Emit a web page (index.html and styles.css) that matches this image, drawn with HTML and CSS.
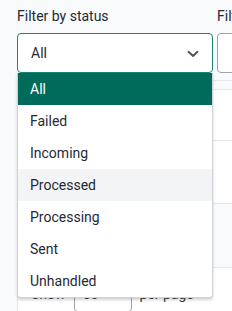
FILE: index.html
```html
<!DOCTYPE html>
<html>
<head>
<meta charset="utf-8">
<link rel="stylesheet" href="styles.css">
</head>
<body>
<div class="page">
  <div class="filters">
    <div class="filter">
      <label class="label">Filter by status</label>
      <div class="select-wrap">
        <div class="select focused">
          <span>All</span>
          <svg class="chev" width="12" height="8" viewBox="0 0 12 8"><path d="M1.5 1.8 L6 6 L10.5 1.8" fill="none" stroke="#4b5563" stroke-width="1.9" stroke-linecap="round" stroke-linejoin="round"/></svg>
        </div>
        <ul class="menu">
          <li class="opt selected">All</li>
          <li class="opt">Failed</li>
          <li class="opt">Incoming</li>
          <li class="opt hover">Processed</li>
          <li class="opt">Processing</li>
          <li class="opt">Sent</li>
          <li class="opt">Unhandled</li>
        </ul>
      </div>
    </div>
    <div class="filter">
      <label class="label">Filter by type</label>
      <div class="select"><span></span></div>
    </div>
  </div>
  <div class="card">
    <div class="thead"></div>
    <div class="row r1"></div>
    <div class="row r2"></div>
    <div class="row r3 striped"></div>
    <div class="pager">
      <span>Show</span>
      <div class="per">50 <span class="caret">▾</span></div>
      <span>per page</span>
    </div>
  </div>
</div>
</body>
</html>
```
FILE: styles.css
```css
* { box-sizing: border-box; }
html, body { margin: 0; padding: 0; }
body {
  background: #f9fafb;
  font-family: Roboto, "Liberation Sans", sans-serif;
  color: #1f2937;
  width: 232px;
  height: 311px;
  overflow: hidden;
}
.page { padding: 6px 0 0 17px; }
.filters { display: flex; gap: 4px; }
.filter { width: 196px; flex: none; display: flex; flex-direction: column; gap: 7px; }
.label { font-size: 14px; line-height: 20px; font-weight: 400; color: #1f2937; white-space: nowrap; }
.select-wrap { position: relative; }
.select {
  height: 40px;
  border: 1px solid #9ca3af;
  border-radius: 4px;
  background: #fff;
  display: flex;
  align-items: center;
  justify-content: space-between;
  padding: 0 13px 0 13px;
  font-size: 14px;
  color: #1f2937;
}
.select.focused { border-color: #14876f; }
.chev { display: block; margin-top: 1px; }
.menu {
  position: absolute;
  top: 40px;
  left: 0;
  width: 196px;
  margin: 0;
  padding: 0;
  list-style: none;
  background: #fff;
  border: 1px solid #d1d5db;
  border-top: none;
  border-radius: 0 0 4px 4px;
  box-shadow: 0 2px 3px rgba(0,0,0,0.18);
  z-index: 5;
  overflow: hidden;
}
.opt {
  height: 32px;
  line-height: 32px;
  padding-left: 12px;
  font-size: 14px;
  color: #1f2937;
}
.opt.selected { background: #006b5b; color: #fff; }
.opt.hover { background: #f3f4f6; }
.card {
  margin-top: 7px;
  background: #fff;
  border: 1px solid #e5e7eb;
  border-radius: 4px 4px 0 0;
  width: 240px;
}
.thead { height: 9px; background: #f9fafb; border-bottom: 1px solid #e5e7eb; }
.row { border-bottom: 1px solid #e5e7eb; }
.r1 { height: 51px; }
.r2 { height: 63px; }
.r3 { height: 64px; }
.striped { background: #f9fafb; }
.pager {
  display: flex;
  align-items: center;
  gap: 8px;
  padding: 8px 0 0 13px;
  font-size: 14px;
  color: #374151;
}
.per {
  width: 58px;
  height: 36px;
  border: 1px solid #9ca3af;
  border-radius: 4px;
  padding-left: 8px;
  display: flex;
  align-items: center;
  gap: 6px;
}
.caret { font-size: 11px; color: #4b5563; }
```
